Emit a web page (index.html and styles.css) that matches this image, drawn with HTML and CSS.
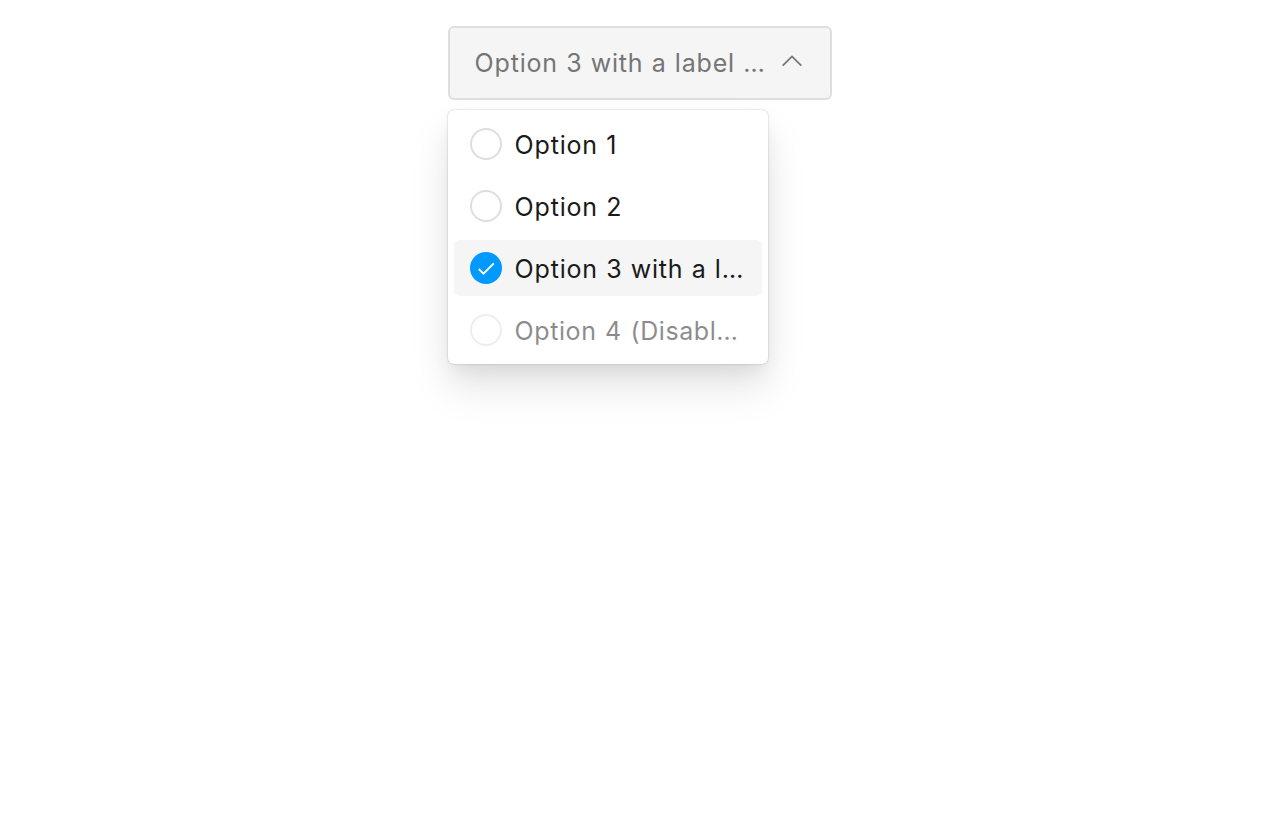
FILE: index.html
```html
<!DOCTYPE html>
<html lang="en">
<head>
<meta charset="utf-8">
<title>Select</title>
<link rel="stylesheet" href="styles.css">
</head>
<body>
<div class="select">
  <div class="trigger">
    <span class="trigger-label">Option 3 with a label …</span>
    <svg class="chevron" width="20" height="12" viewBox="0 0 20 12"><path d="M.7 10.7 10 1.4l9.3 9.3"/></svg>
  </div>
  <ul class="menu">
    <li class="option"><span class="radio"></span><span class="label">Option 1</span></li>
    <li class="option"><span class="radio"></span><span class="label">Option 2</span></li>
    <li class="option selected"><span class="radio"><svg class="check" width="32" height="32" viewBox="0 0 32 32"><path d="M8.8 17l4.7 4.7L23.8 11.4"/></svg></span><span class="label">Option 3 with a l…</span></li>
    <li class="option disabled"><span class="radio"></span><span class="label">Option 4 (Disabl…</span></li>
  </ul>
</div>
</body>
</html>
```

FILE: styles.css
```css
* { box-sizing: border-box; }
body { margin: 0; padding-top: 26px; min-height: 820px; background: #fff; font: 25px/40px Inter, sans-serif; letter-spacing: 0.82px; word-spacing: 0.4px; color: #1a1a1a; }
.select { width: 384px; margin: 0 auto; }
.trigger { display: flex; align-items: center; height: 74px; padding: 0 28px 0 24.6px; border: 2px solid #dedede; border-radius: 6px; background: #f5f5f5; color: #757575; }
.trigger-label { flex: 1; white-space: nowrap; }
.chevron { margin-top: -4px; fill: none; stroke: #757575; stroke-width: 1.8; }
.menu { display: grid; grid-template-columns: 308px; gap: 6px; width: 320px; margin: 10px 0 0; padding: 6px; list-style: none; border-radius: 6px; background: #fff; box-shadow: 0 0 2px rgba(0,0,0,.28), 0 10px 20px -4px rgba(0,0,0,.08), 0 24px 40px rgba(0,0,0,.1); }
.option { display: flex; align-items: center; gap: 12.6px; height: 56px; padding: 0 16px; border-radius: 6px; white-space: nowrap; }
.label { padding-top: 2px; }
.radio { width: 32px; height: 32px; border: 2px solid #dedede; border-radius: 50%; background: #fff; }
.selected { background: #f5f5f5; }
.selected .radio { border: 0; background: #0099ff; }
.check { display: block; fill: none; stroke: #fff; stroke-width: 2; }
.disabled { opacity: .5; letter-spacing: 0.58px; word-spacing: 1px; }
```
